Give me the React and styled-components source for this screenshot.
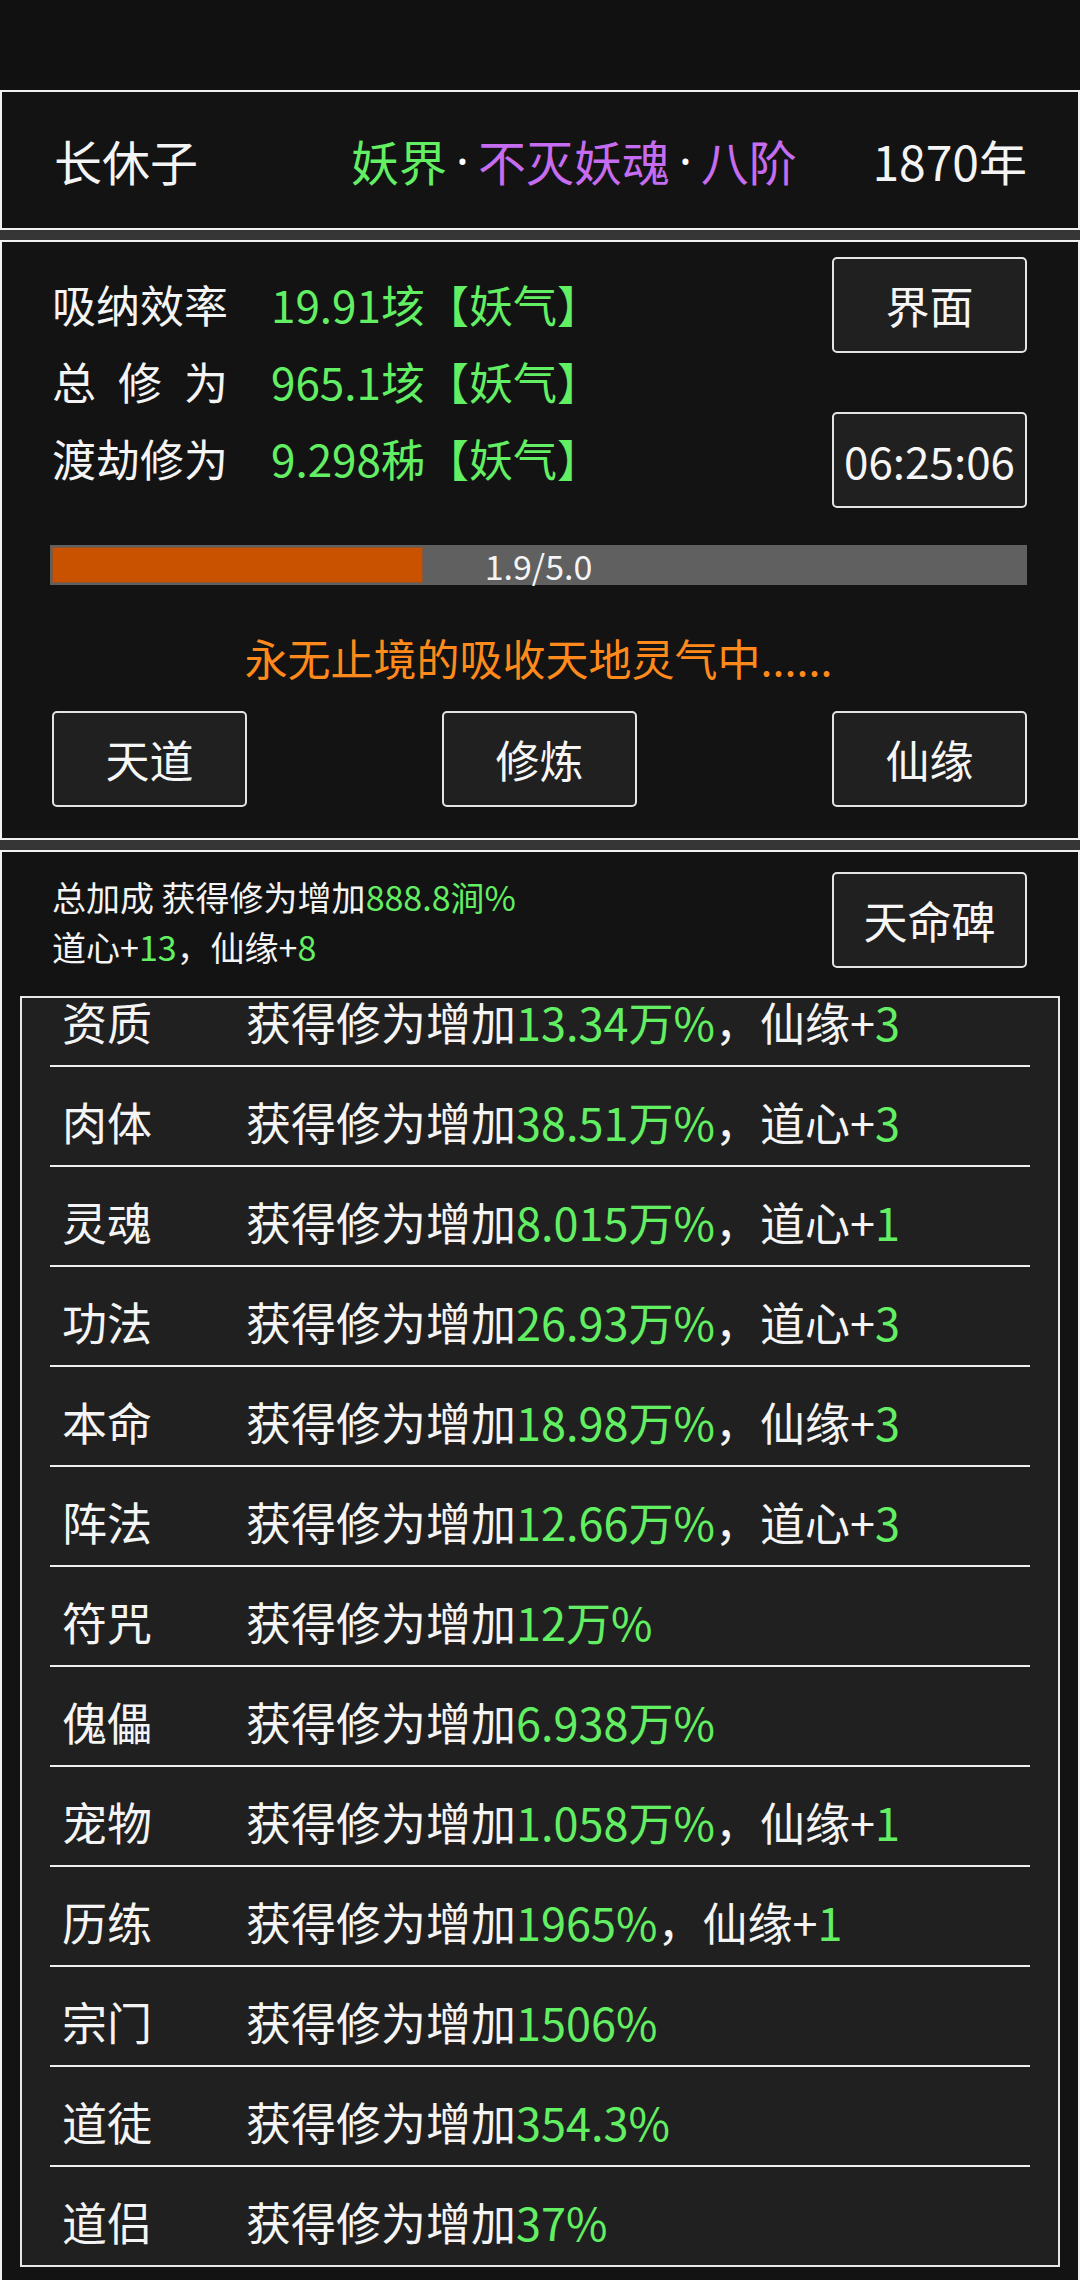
import React from 'react';
import styled, { createGlobalStyle } from 'styled-components';

const GREEN = '#63ef63';
const PURPLE = '#c66cf0';

const GlobalStyle = createGlobalStyle`
  html, body {
    margin: 0;
    padding: 0;
  }
  body {
    background: #363636;
    color: #f4f4f4;
    font-family: "Noto Sans CJK SC", "Noto Sans", sans-serif;
    height: 2280px;
    overflow: hidden;
  }
  * {
    box-sizing: border-box;
  }
`;

const stats = [
  { label: ['吸', '纳', '效', '率'], value: '19.91垓【妖气】' },
  { label: ['总', '修', '为'], value: '965.1垓【妖气】' },
  { label: ['渡', '劫', '修', '为'], value: '9.298秭【妖气】' },
];

const bonuses = [
  { name: '资质', value: '13.34万%', extra: '仙缘', plus: '3' },
  { name: '肉体', value: '38.51万%', extra: '道心', plus: '3' },
  { name: '灵魂', value: '8.015万%', extra: '道心', plus: '1' },
  { name: '功法', value: '26.93万%', extra: '道心', plus: '3' },
  { name: '本命', value: '18.98万%', extra: '仙缘', plus: '3' },
  { name: '阵法', value: '12.66万%', extra: '道心', plus: '3' },
  { name: '符咒', value: '12万%' },
  { name: '傀儡', value: '6.938万%' },
  { name: '宠物', value: '1.058万%', extra: '仙缘', plus: '1' },
  { name: '历练', value: '1965%', extra: '仙缘', plus: '1' },
  { name: '宗门', value: '1506%' },
  { name: '道徒', value: '354.3%' },
  { name: '道侣', value: '37%' },
];

function App() {
  const progress = 1.9 / 5.0;

  return (
    <Page>
      <GlobalStyle />
      <StatusBar />

      <Panel $height={140}>
        <HeaderRow>
          <PlayerName>长休子</PlayerName>
          <Realm>
            <Colored $color={GREEN}>妖界</Colored>
            <Dot>·</Dot>
            <Colored $color={PURPLE}>不灭妖魂</Colored>
            <Dot>·</Dot>
            <Colored $color={PURPLE}>八阶</Colored>
          </Realm>
          <Year>1870年</Year>
        </HeaderRow>
      </Panel>

      <Panel $height={600}>
        <CultivateBody>
          <TopSection>
            <StatList>
              {stats.map((s) => (
                <StatRow key={s.value}>
                  <StatLabel>
                    {s.label.map((c, i) => (
                      <span key={i}>{c}</span>
                    ))}
                  </StatLabel>
                  <Colored $color={GREEN}>{s.value}</Colored>
                </StatRow>
              ))}
            </StatList>
            <SideButtons>
              <Button>界面</Button>
              <Button>06:25:06</Button>
            </SideButtons>
          </TopSection>

          <ProgressBar>
            <ProgressFill style={{ width: `${progress * 100}%` }} />
            <ProgressText>1.9/5.0</ProgressText>
          </ProgressBar>

          <StatusText>永无止境的吸收天地灵气中......</StatusText>

          <ButtonRow>
            <Button>天道</Button>
            <Button>修炼</Button>
            <Button>仙缘</Button>
          </ButtonRow>
        </CultivateBody>
      </Panel>

      <Panel $height={1430} $open>
        <BonusHeader>
          <TotalText>
            <div>
              总加成 获得修为增加<Colored $color={GREEN}>888.8涧%</Colored>
            </div>
            <div>
              道心+<Colored $color={GREEN}>13</Colored>，仙缘+<Colored $color={GREEN}>8</Colored>
            </div>
          </TotalText>
          <Button>天命碑</Button>
        </BonusHeader>

        <BonusBox>
          <BonusList>
            {bonuses.map((b) => (
              <BonusRow key={b.name}>
                <BonusName>{b.name}</BonusName>
                <span>
                  获得修为增加<Colored $color={GREEN}>{b.value}</Colored>
                  {b.extra && (
                    <>
                      ，{b.extra}+<Colored $color={GREEN}>{b.plus}</Colored>
                    </>
                  )}
                </span>
              </BonusRow>
            ))}
          </BonusList>
        </BonusBox>
      </Panel>
    </Page>
  );
}

// Styled Components
const Page = styled.div`
  display: flex;
  flex-direction: column;
  gap: 10px;
  width: 1080px;
  height: 2280px;
  overflow: hidden;
`;

const StatusBar = styled.div`
  height: 90px;
  margin-bottom: -10px;
  background: #111111;
  flex-shrink: 0;
`;

const Panel = styled.section`
  height: ${(p) => p.$height}px;
  flex-shrink: 0;
  background: #131313;
  border: 2px solid #f2f2f2;
  border-bottom: ${(p) => (p.$open ? 'none' : '2px solid #f2f2f2')};
`;

const Colored = styled.span`
  color: ${(p) => p.$color};
`;

const HeaderRow = styled.div`
  height: 100%;
  display: flex;
  align-items: center;
  padding: 0 51px 0 52px;
  font-size: 48px;
`;

const PlayerName = styled.div`
  width: 297px;
`;

const Realm = styled.div`
  display: flex;
  align-items: center;
`;

const Dot = styled.span`
  font-family: "Noto Sans", "DejaVu Sans", sans-serif;
  color: #ffffff;
  margin: 0 9px;
`;

const Year = styled.div`
  margin-left: auto;
`;

const CultivateBody = styled.div`
  display: flex;
  flex-direction: column;
  padding: 15px 51px 0 48px;
`;

const TopSection = styled.div`
  display: flex;
  justify-content: space-between;
  align-items: flex-start;
`;

const StatList = styled.div`
  display: flex;
  flex-direction: column;
  margin-top: 8px;
  padding-left: 2px;
`;

const StatRow = styled.div`
  display: flex;
  align-items: center;
  height: 77px;
  font-size: 44px;
`;

const StatLabel = styled.div`
  display: flex;
  justify-content: space-between;
  width: 176px;
  margin-right: 43px;
`;

const SideButtons = styled.div`
  display: flex;
  flex-direction: column;
  gap: 59px;
`;

const Button = styled.button`
  width: 195px;
  height: 96px;
  padding: 0;
  background: #202020;
  border: 2px solid #e4e4e4;
  border-radius: 5px;
  color: #f6f6f6;
  font-family: inherit;
  font-size: 44px;
  display: flex;
  align-items: center;
  justify-content: center;
  flex-shrink: 0;
`;

const ProgressBar = styled.div`
  position: relative;
  margin-top: 37px;
  height: 40px;
  background: #606060;
  padding: 2px 0 2px 2px;
  display: flex;
`;

const ProgressFill = styled.div`
  height: 100%;
  background: #c85200;
  border: 1px solid #8d5530;
`;

const ProgressText = styled.div`
  position: absolute;
  inset: 0;
  display: flex;
  align-items: center;
  justify-content: center;
  font-size: 34px;
  color: #f4f4f4;
`;

const StatusText = styled.div`
  margin-top: 42px;
  height: 60px;
  line-height: 60px;
  text-align: center;
  font-size: 43px;
  color: #ff8a1c;
`;

const ButtonRow = styled.div`
  margin-top: 24px;
  display: flex;
  justify-content: space-between;
  padding-left: 2px;
`;

const BonusHeader = styled.div`
  display: flex;
  justify-content: space-between;
  align-items: flex-start;
  padding: 20px 51px 0 50px;
`;

const TotalText = styled.div`
  font-size: 34px;
  line-height: 50px;
`;

const BonusBox = styled.div`
  margin: 24px 18px 0;
  height: 1271px;
  background: #202020;
  border: 2px solid #e8e8e8;
  overflow: hidden;
`;

const BonusList = styled.div`
  margin-top: -31px;
  padding: 0 28px;
`;

const BonusRow = styled.div`
  display: flex;
  align-items: center;
  height: 100px;
  padding: 12px 0 0 12px;
  border-bottom: 2px solid #f0f0f0;
  font-size: 45px;
  line-height: 1.2;
`;

const BonusName = styled.div`
  width: 184px;
`;

export default App;
